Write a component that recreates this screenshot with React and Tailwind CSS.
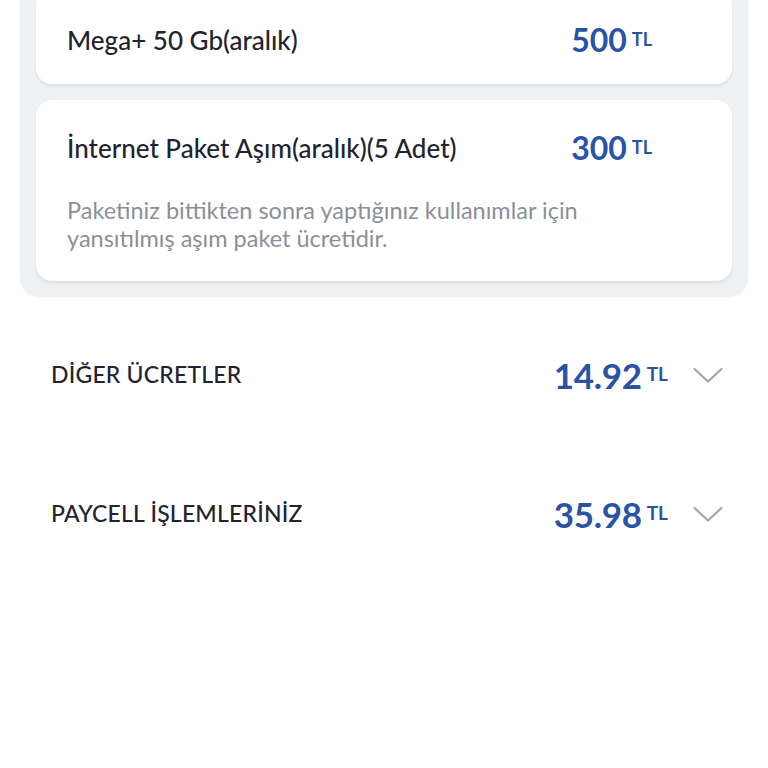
import React from "react";

const font = { fontFamily: "Lato, 'Noto Sans', sans-serif" };

function Price({ value, big }) {
  return (
    <div className="flex items-center text-[#2a53a6] font-bold">
      <span className={big ? "text-[35px] leading-[40px] tracking-[-0.3px]" : "text-[32px] leading-[34px]"}>{value}</span>
      <span className={big ? "text-[19px] leading-none ml-[5px] -mt-[2px]" : "text-[18px] leading-none ml-[5px] -mt-[2px]"}>TL</span>
    </div>
  );
}

function Chevron() {
  return (
    <svg width="30" height="18" viewBox="0 0 30 18" fill="none">
      <path d="M1.5 3 L15 15.5 L28.5 3" stroke="#9fa5b4" strokeWidth="2.2" strokeLinecap="round" strokeLinejoin="round" />
    </svg>
  );
}

function Row({ label, value }) {
  return (
    <div className="h-[139px] flex items-center pl-[51px] pr-[45px]">
      <div className="flex-1 text-[23px] font-medium text-[#1f2430] tracking-[0.2px]">{label}</div>
      <Price value={value} big />
      <div className="ml-[25px]">
        <Chevron />
      </div>
    </div>
  );
}

export default function App() {
  return (
    <div className="w-[768px] h-[768px] bg-white overflow-hidden" style={font}>
      <div className="mx-[20px] -mt-[11px] bg-[#eef1f4] rounded-b-[20px] shadow-[0_2px_4px_rgba(0,0,0,0.03)] px-[16px] pb-[16px] flex flex-col gap-[16px]">
        <div className="bg-white rounded-[16px] shadow-[0_2px_3px_rgba(0,0,0,0.08)] pl-[31px] pr-[80px] pt-[34px] pb-[27px] flex items-center">
          <div className="flex-1 text-[26px] leading-[34px] font-medium text-[#1f2430]">Mega+ 50 Gb(aralık)</div>
          <Price value="500" />
        </div>
        <div className="bg-white rounded-[16px] shadow-[0_2px_3px_rgba(0,0,0,0.08)] pl-[31px] pr-[80px] pt-[31px] pb-[29px]">
          <div className="flex items-center">
            <div className="flex-1 text-[26px] leading-[34px] font-medium text-[#1f2430]">İnternet Paket Aşım(aralık)(5 Adet)</div>
            <Price value="300" />
          </div>
          <div className="mt-[31px] text-[23.5px] leading-[28px] text-[#8b8f97] pr-[60px]">
            Paketiniz bittikten sonra yaptığınız kullanımlar için yansıtılmış aşım paket ücretidir.
          </div>
        </div>
      </div>
      <div className="mt-[8px]">
        <Row label="DİĞER ÜCRETLER" value="14.92" />
        <Row label="PAYCELL İŞLEMLERİNİZ" value="35.98" />
      </div>
    </div>
  );
}
